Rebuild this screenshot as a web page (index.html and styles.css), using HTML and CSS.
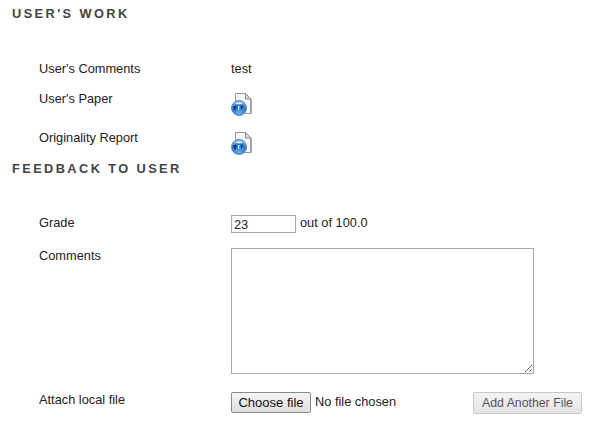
FILE: index.html
```html
<!DOCTYPE html>
<html lang="en">
<head>
    <meta charset="UTF-8">
    <title>User's Work</title>
    <link rel="stylesheet" href="styles.css">
</head>
<body>
    <svg class="sprites" width="0" height="0">
        <defs>
            <radialGradient id="globeFill" cx="0.5" cy="0.85" r="0.85">
                <stop offset="0" stop-color="#5fb0f0"/>
                <stop offset="0.6" stop-color="#2f78cc"/>
                <stop offset="1" stop-color="#a9c9ec"/>
            </radialGradient>
            <symbol id="docGlobe" viewBox="0 0 21 23">
                <path d="M4.5 .5H14.5L20 6V20.5H4.5Z" fill="#f6f6f6" stroke="#9a9a9a"/>
                <path d="M14.5 .5V6H20Z" fill="#d8d8d8" stroke="#8c8c8c"/>
                <path d="M20 6.5V20.5" stroke="#777"/>
                <circle cx="8" cy="15" r="7.5" fill="url(#globeFill)" stroke="#5a86bb"/>
                <path d="M2 13.5L5 12.5L5.5 14.5L4.5 18L3 16.5Z" fill="#123a70"/>
                <path d="M9.5 13L12.5 12.5L11.5 14.5L10.5 17.5L10 15Z" fill="#123a70"/>
                <path d="M7 13L8.5 13L8 17L7.5 17Z" fill="#dcebfa"/>
                <path d="M4 10.5Q8 8.5 12 10.5Q8 12 4 10.5Z" fill="#eef5fc"/>
            </symbol>
        </defs>
    </svg>

    <h2 class="heading">User's Work</h2>
    <div class="rows first">
        <div class="row row-comments">
            <div class="label">User's Comments</div>
            <div class="value test">test</div>
        </div>
        <div class="row row-paper">
            <div class="label">User's Paper</div>
            <div class="value"><svg class="doc-icon"><use href="#docGlobe"/></svg></div>
        </div>
        <div class="row row-report">
            <div class="label">Originality Report</div>
            <div class="value"><svg class="doc-icon"><use href="#docGlobe"/></svg></div>
        </div>
    </div>

    <h2 class="heading">Feedback to User</h2>
    <div class="rows second">
        <div class="row row-grade">
            <div class="label">Grade</div>
            <div class="value grade-line"><input class="grade" type="text" value="23"> <span class="out-of">out of 100.0</span></div>
        </div>
        <div class="row row-text">
            <div class="label">Comments</div>
            <div class="value"><textarea class="comments"></textarea></div>
        </div>
        <div class="row row-file">
            <div class="label">Attach local file</div>
            <div class="value file-line">
                <button class="choose" type="button">Choose file</button>
                <span class="no-file">No file chosen</span>
                <button class="add-file" type="button">Add Another File</button>
            </div>
        </div>
    </div>
</body>
</html>
```

FILE: styles.css
```css
body {
    margin: 0;
    padding: 7px 24px 0 12px;
    background-color: #fff;
    color: #222;
    font-family: "Liberation Sans", Arial, sans-serif;
    font-size: 12.8px;
}
.sprites {
    display: block;
    height: 0;
}
.heading {
    margin: 0;
    color: #444;
    font-size: 12.8px;
    font-weight: bold;
    line-height: 14px;
    letter-spacing: 2.4px;
    text-transform: uppercase;
}
.rows {
    padding-left: 27px;
}
.rows.first {
    padding-top: 40px;
    padding-bottom: 8px;
}
.rows.second {
    padding-top: 39px;
}
.row {
    display: grid;
    grid-template-columns: 192px 1fr;
    line-height: 14px;
}
.label, .test {
    padding-top: 1px;
}
.row-paper {
    padding-top: 15px;
}
.row-report {
    padding-top: 15px;
}
.doc-icon {
    display: block;
    width: 21px;
    height: 23px;
    margin-top: 2px;
    margin-bottom: -1px;
}
.grade-line {
    display: flex;
    align-items: flex-start;
    gap: 4px;
}
.grade {
    box-sizing: border-box;
    width: 65px;
    height: 18px;
    margin: 0;
    padding: 1px 2px;
    border: 1px solid #a9a9a9;
    color: #222;
    font: 12.8px "Liberation Sans", Arial, sans-serif;
}
.out-of {
    padding-top: 1px;
}
.row-text {
    padding-top: 15px;
}
.comments {
    display: block;
    box-sizing: border-box;
    width: 303px;
    height: 126px;
    margin: 0;
    border: 1px solid #a9a9a9;
}
.row-file {
    padding-top: 18px;
}
.file-line {
    display: flex;
    align-items: flex-start;
}
.choose {
    width: 80px;
    height: 21px;
    padding: 0;
    border: 1px solid #8a8a8a;
    border-radius: 2px;
    background: linear-gradient(#f6f6f6, #dedede);
    color: #111;
    font: 13px "Liberation Sans", Arial, sans-serif;
}
.no-file {
    margin: 3px 0 0 4px;
}
.add-file {
    width: 109px;
    height: 22px;
    margin-left: auto;
    padding: 0;
    border: 1px solid #c8c8c8;
    border-radius: 2px;
    background: linear-gradient(#f4f4f4, #e4e4e4);
    color: #555;
    font: 12.3px "Liberation Sans", Arial, sans-serif;
}
```
